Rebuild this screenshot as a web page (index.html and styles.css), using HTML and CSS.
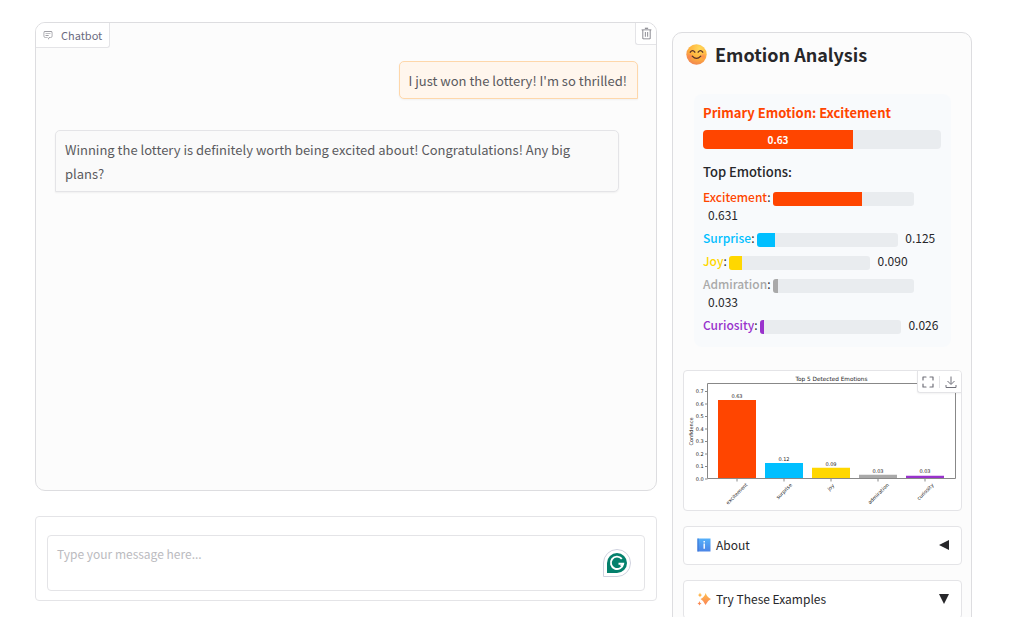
FILE: index.html
```html
<!DOCTYPE html>
<html lang="en">
<head>
<meta charset="utf-8">
<meta name="viewport" content="width=device-width, initial-scale=1">
<title>Emotion Chatbot</title>
<link rel="stylesheet" href="styles.css">
</head>
<body>
<div class="page">
  <main class="chat-column">
    <section class="chatbot" aria-label="Chatbot conversation">
      <header class="chatbot-bar">
        <div class="chatbot-label">
          <svg class="icon-chat" viewBox="0 0 32 32" aria-hidden="true"><path fill="currentColor" d="M17.740 30 16 29l4-7h6a2 2 0 0 0 2-2V8a2 2 0 0 0-2-2H6a2 2 0 0 0-2 2v12a2 2 0 0 0 2 2h9v2H6a4 4 0 0 1-4-4V8a4 4 0 0 1 4-4h20a4 4 0 0 1 4 4v12a4 4 0 0 1-4 4h-4.840z"/><path fill="currentColor" d="M8 10h16v2H8zM8 16h10v2H8z"/></svg>
          <span>Chatbot</span>
        </div>
        <button class="clear-button" type="button" aria-label="Clear">
          <svg class="icon-trash" viewBox="0 0 32 32" aria-hidden="true"><path fill="currentColor" d="M12 12h2v12h-2zM18 12h2v12h-2z"/><path fill="currentColor" d="M4 6v2h2v20a2 2 0 0 0 2 2h16a2 2 0 0 0 2-2V8h2V6zm4 22V8h16v20zM12 2h8v2h-8z"/></svg>
        </button>
      </header>
      <div class="messages">
        <p class="message message-user">I just won the lottery! I'm so thrilled!</p>
        <p class="message message-bot">Winning the lottery is definitely worth being excited about! Congratulations! Any big plans?</p>
      </div>
    </section>
    <section class="composer">
      <textarea class="composer-input" aria-label="Message" placeholder="Type your message here..."></textarea>
      <button class="assistant-badge" type="button" aria-label="Writing assistant">
        <svg viewBox="0 0 28 28" aria-hidden="true"><path d="M.5 27.500V14A13.500 13.500 0 1 1 14 27.500z" fill="#fff" stroke="#cfd1de"/><path d="M4 24V14a10 10 0 1 1 10 10z" fill="#04806c"/><path d="M18.800 9.800A6.200 6.200 0 1 0 20.200 14.800H15.500" fill="none" stroke="#fff" stroke-width="1.900"/><path d="M17.600 16.800 20.200 14.800" fill="none" stroke="#fff" stroke-width="1.500"/></svg>
      </button>
    </section>
  </main>

  <aside class="sidebar">
    <h2 class="sidebar-title">
      <svg class="icon-smile" viewBox="0 0 32 32" aria-hidden="true">
        <defs>
          <radialGradient id="face" cx="65%" cy="20%" r="85%"><stop offset="0" stop-color="#ffd95a"/><stop offset=".6" stop-color="#ffb03c"/><stop offset="1" stop-color="#f08350"/></radialGradient>
          <radialGradient id="cheek"><stop offset="0" stop-color="#ff6f5e" stop-opacity=".6"/><stop offset="1" stop-color="#ff6f5e" stop-opacity="0"/></radialGradient>
        </defs>
        <circle cx="16" cy="16" r="15.500" fill="url(#face)"/>
        <circle cx="6" cy="19" r="5" fill="url(#cheek)"/><circle cx="26" cy="19" r="5" fill="url(#cheek)"/>
        <path d="M6.500 12.500q3.500-5 7 0M18.500 12.500q3.500-5 7 0M9.500 18.500q6.500 7 13 0" fill="none" stroke="#5a3028" stroke-width="2" stroke-linecap="round"/>
      </svg>
      <span>Emotion Analysis</span>
    </h2>

    <section class="emotions">
      <h3 class="primary">Primary Emotion: Excitement</h3>
      <div class="primary-track"><div class="primary-fill" style="width:63%">0.63</div></div>
      <h4 class="top-title">Top Emotions:</h4>
      <div class="emotion excitement"><b>Excitement</b>: <span class="track"><span class="fill" style="width:63.1%"></span></span> <span class="score">0.631</span></div>
      <div class="emotion surprise"><b>Surprise</b>: <span class="track"><span class="fill" style="width:12.5%"></span></span> <span class="score">0.125</span></div>
      <div class="emotion joy"><b>Joy</b>: <span class="track"><span class="fill" style="width:9%"></span></span> <span class="score">0.090</span></div>
      <div class="emotion admiration"><b>Admiration</b>: <span class="track"><span class="fill" style="width:3.3%"></span></span> <span class="score">0.033</span></div>
      <div class="emotion curiosity"><b>Curiosity</b>: <span class="track"><span class="fill" style="width:2.6%"></span></span> <span class="score">0.026</span></div>
    </section>

    <figure class="plot">
      <svg class="plot-image" viewBox="0 0 1108 556" role="img" aria-label="Top 5 Detected Emotions">
        <path class="bar-excitement" d="M136 116h152v316H136z"/>
        <path class="bar-surprise" d="M324 368h152v64H324z"/>
        <path class="bar-joy" d="M512 387h152v45H512z"/>
        <path class="bar-admiration" d="M700 415h152v17H700z"/>
        <path class="bar-curiosity" d="M888 419h152v13H888z"/>
        <path class="axis" d="M94 50H1086V430H94z"/>
        <path class="axis" d="M84 432h10M84 382h10M84 332h10M84 282h10M84 232h10M84 182h10M84 132h10M84 82h10M212 432v10M400 432v10M588 432v10M776 432v10M964 432v10"/>
        <text class="plot-title" x="590" y="40">Top 5 Detected Emotions</text>
        <g class="end">
          <text x="79" y="439">0.0</text><text x="79" y="389">0.1</text><text x="79" y="339">0.2</text><text x="79" y="289">0.3</text><text x="79" y="239">0.4</text><text x="79" y="189">0.5</text><text x="79" y="139">0.6</text><text x="79" y="89">0.7</text>
        </g>
        <g class="middle">
          <text x="212" y="106">0.63</text><text x="400" y="361">0.12</text><text x="588" y="378">0.09</text><text x="776" y="406">0.03</text><text x="964" y="409">0.03</text>
          <text class="axis-name" transform="translate(36 242) rotate(-90)">Confidence</text>
          <text transform="translate(216 496) rotate(-45)">excitement</text>
          <text transform="translate(405 486) rotate(-45)">surprise</text>
          <text transform="translate(592 470) rotate(-45)">joy</text>
          <text transform="translate(782 496) rotate(-45)">admiration</text>
          <text transform="translate(970 488) rotate(-45)">curiosity</text>
        </g>
      </svg>
      <div class="plot-tools">
        <button type="button" aria-label="View fullscreen"><svg viewBox="0 0 12 12" aria-hidden="true"><path d="M1 4V1h3M8 1h3v3M11 8v3H8M4 11H1V8" fill="none" stroke="currentColor" stroke-linejoin="round" stroke-linecap="round" stroke-width="1.200"/></svg></button>
        <span class="tool-divider"></span>
        <button type="button" aria-label="Download"><svg viewBox="0 0 12 12" aria-hidden="true"><path d="M6 .500V8M2.500 5 6 8.500 9.500 5M1 9v2.500h10V9" fill="none" stroke="currentColor" stroke-linejoin="round"/></svg></button>
      </div>
    </figure>

    <button class="accordion" type="button" aria-expanded="false">
      <svg class="icon-small" viewBox="0 0 14 14" aria-hidden="true"><defs><linearGradient id="info" x2="0" y2="1"><stop stop-color="#55b0fa"/><stop offset="1" stop-color="#4b84e6"/></linearGradient></defs><path d="M.500 .500h13v13H.500z" fill="url(#info)"/><path d="M.500 .500h1v13H.500z" fill="#3973d4"/><path d="M6.500 3h1.400v1.400H6.500zM6.500 5.600h1.400v5.200H6.500z" fill="#fff"/></svg>
      <span>About</span>
      <svg class="caret" viewBox="0 0 10 10" aria-hidden="true"><path d="M10 0v10L0 5z" fill="currentColor"/></svg>
    </button>
    <button class="accordion" type="button" aria-expanded="true">
      <svg class="icon-small" viewBox="0 0 14 14" aria-hidden="true"><defs><linearGradient id="spark" x2="0" y2="1"><stop stop-color="#ffc24a"/><stop offset="1" stop-color="#fa8058"/></linearGradient></defs><path d="M8.700 1Q9.800 5.200 14 7 10 8.800 8.500 13 7 8.800 3.500 7 7.500 5.200 8.700 1zM3 .500Q3.400 2.500 5 3 3.400 3.700 3 5.300 2.500 3.700 1 3 2.500 2.500 3 .500zM2.500 9Q2.900 11 4.500 11.500 2.900 12 2.500 13.500 2.100 12 .500 11.500 2.100 11 2.500 9z" fill="url(#spark)"/></svg>
      <span>Try These Examples</span>
      <svg class="caret" viewBox="0 0 10 10" aria-hidden="true"><path d="M0 0h10L5 10z" fill="currentColor"/></svg>
    </button>
  </aside>
</div>
</body>
</html>
```
FILE: styles.css
```css
* { box-sizing: border-box; }

body {
  margin: 0;
  background: #fff;
  color: #27272a;
  font-family: "Noto Sans CJK SC", "Noto Sans", sans-serif;
  font-size: 12px;
  line-height: 18px;
}

button, textarea { font: inherit; color: inherit; }
button { padding: 0; border: 0; background: none; }
h2, h3, h4, p, figure { margin: 0; }
svg { display: block; flex: none; }

.page {
  display: grid;
  grid-template-columns: minmax(0, 622fr) minmax(0, 300fr);
  gap: 15px;
  align-items: start;
  height: 100vh;
  padding: 22px 50px 0 35px;
  overflow: hidden;
}

/* Conversation */
.chat-column { display: grid; gap: 25px; }

.chatbot {
  min-height: 469px;
  border: 1px solid #dddde0;
  border-radius: 10px;
  background: #fcfcfc;
  overflow: hidden;
}
.chatbot-bar {
  display: flex;
  justify-content: space-between;
  align-items: flex-start;
  color: #71717a;
}
.chatbot-label {
  display: flex;
  align-items: center;
  gap: 8px;
  height: 25px;
  padding: 0 7px 1px;
  border: solid #e4e4e7;
  border-width: 0 1px 1px 0;
  border-radius: 0 0 3px 0;
  background: #fff;
  color: #6b6b80;
  font-size: 11px;
}
.icon-chat { width: 10px; height: 10px; color: #808088; }
.clear-button {
  display: grid;
  place-items: center;
  width: 21px;
  height: 22px;
  border: solid #e4e4e7;
  border-width: 0 0 1px 1px;
  border-radius: 0 0 0 3px;
  background: #fff;
}
.icon-trash { width: 13px; height: 13px; }

.messages {
  display: flex;
  flex-direction: column;
  gap: 31px;
  padding: 13px 18px 0 19px;
}
.message {
  padding: 7px 10px 5px 9px;
  border: 1px solid #e4e4e7;
  border-radius: 5px;
  box-shadow: 0 1px 2px #0000000d;
  color: #5a5a5e;
  font-size: 13px;
  line-height: 24px;
}
.message-user {
  align-self: flex-end;
  border-color: #fed7aa;
  border-bottom-right-radius: 0;
  background: #fff6ed;
}
.message-bot {
  width: calc(100% - 19px);
  border-bottom-left-radius: 0;
  background: #fafafa;
}

.composer {
  position: relative;
  padding: 18px 11px 9px;
  border: 1px solid #e4e4e7;
  border-radius: 4px;
}
.composer-input {
  display: block;
  width: 100%;
  height: 56px;
  padding: 9px;
  border: 1px solid #e4e4e7;
  border-radius: 4px;
  background: #fff;
  resize: none;
}
.composer-input::placeholder { color: #bbbbc0; }
.assistant-badge {
  position: absolute;
  right: 25px;
  top: 32px;
  width: 28px;
  height: 28px;
}

/* Sidebar */
.sidebar {
  display: flex;
  flex-direction: column;
  min-height: 620px;
  margin-top: 10px;
  padding: 9px 9px 0 10px;
  border: 1px solid #dddde0;
  border-radius: 10px;
  background: #fcfcfc;
}
.sidebar-title {
  display: flex;
  align-items: center;
  gap: 8px;
  padding-left: 3px;
  font-size: 18px;
  font-weight: 700;
  line-height: 24px;
}
.icon-smile { width: 21px; height: 21px; }

.emotions {
  margin: 28px 11px 0;
  padding: 9px 10px 8px 9px;
  border-radius: 8px;
  background: #f8fafc;
}
.primary {
  color: #ff4500;
  font-size: 13px;
  font-weight: 700;
  line-height: 20px;
}
.primary-track {
  height: 19px;
  margin-top: 7px;
  border-radius: 4px;
  background: #e9ecef;
  overflow: hidden;
}
.primary-fill {
  height: 100%;
  background: #ff4500;
  color: #fff;
  font-size: 10px;
  font-weight: 700;
  line-height: 19px;
  text-align: center;
}
.top-title {
  margin: 14px 0 7px;
  font-size: 13px;
  font-weight: 500;
  line-height: 18px;
}
.emotion { margin-bottom: 5px; }
.emotion b { font-weight: 500; }
.track {
  display: inline-block;
  width: 59%;
  height: 14px;
  border-radius: 3px;
  background: #e9ecef;
  overflow: hidden;
  vertical-align: middle;
}
.fill { display: block; height: 100%; background: currentColor; }
.score { margin-left: 5px; }
.excitement b, .excitement .fill { color: #ff4500; }
.surprise b, .surprise .fill { color: #00bfff; }
.joy b, .joy .fill { color: #ffd700; }
.admiration b, .admiration .fill { color: #a9a9a9; }
.curiosity b, .curiosity .fill { color: #9932cc; }

/* Chart */
.plot {
  position: relative;
  margin: 23px 0 15px;
  border: 1px solid #e4e4e7;
  border-radius: 4px;
  background: #fff;
  overflow: hidden;
}
.plot-image {
  width: 100%;
  font-family: "DejaVu Sans", sans-serif;
  font-size: 20px;
  fill: #222;
}
.plot-title { font-size: 23px; text-anchor: middle; }
.axis-name { font-size: 20px; }
.end { text-anchor: end; }
.middle { text-anchor: middle; }
.axis { fill: none; stroke: #888; stroke-width: 4px; }
.bar-excitement { fill: #ff4500; }
.bar-surprise { fill: #00bfff; }
.bar-joy { fill: #ffd700; }
.bar-admiration { fill: #a9a9a9; }
.bar-curiosity { fill: #9932cc; }
.plot-tools {
  position: absolute;
  top: 0;
  right: 0;
  display: flex;
  align-items: center;
  gap: 5px;
  height: 22px;
  padding: 0 4px;
  border: solid #e4e4e7;
  border-width: 0 0 1px 1px;
  border-radius: 0 0 0 3px;
  background: #fff;
  box-shadow: 0 1px 2px #0000000d;
  color: #71717a;
}
.plot-tools svg { width: 12px; height: 12px; }
.tool-divider { width: 1px; height: 12px; background: #e4e4e7; }

/* Collapsible panels */
.accordion {
  display: flex;
  align-items: center;
  gap: 5px;
  height: 39px;
  margin-bottom: 15px;
  padding: 0 12px 2px 13px;
  border: 1px solid #e4e4e7;
  border-radius: 4px;
  background: #fff;
  text-align: left;
}
.icon-small { width: 14px; height: 14px; }
.caret { width: 10px; height: 10px; margin-left: auto; }
```
